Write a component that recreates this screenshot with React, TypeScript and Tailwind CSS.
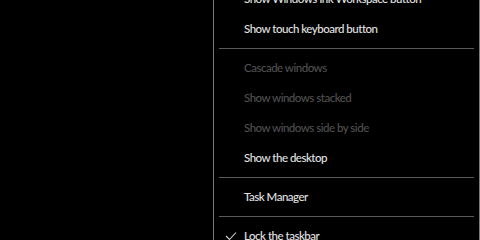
const items: ({ label: string; disabled?: boolean; checked?: boolean } | 'sep')[] = [
  { label: 'Show Windows Ink Workspace button' },
  { label: 'Show touch keyboard button' },
  'sep',
  { label: 'Cascade windows', disabled: true },
  { label: 'Show windows stacked', disabled: true },
  { label: 'Show windows side by side', disabled: true },
  { label: 'Show the desktop' },
  'sep',
  { label: 'Task Manager' },
  'sep',
  { label: 'Lock the taskbar', checked: true },
];

export default function App() {
  return (
    <div className="w-[480px] h-[240px] overflow-hidden bg-black flex font-['Lato',sans-serif]">
      <div className="w-[213px] shrink-0" />
      <div className="flex-1 -mt-[16px] h-[300px] border-x border-[#7a7a7a] bg-black">
        {items.map((it, i) =>
          it === 'sep' ? (
            <div key={i} className="h-[9px] flex items-center px-[5px]">
              <div className="h-px w-full bg-[#5a5a5a]" />
            </div>
          ) : (
            <div key={i} className="h-[30px] flex items-center">
              <div className="w-[30px] flex justify-end pr-[7px]">
                {it.checked && (
                  <svg width="12" height="10" viewBox="0 0 12 10" fill="none" stroke="#d0d0d0" strokeWidth="1.1">
                    <path d="M1 5 L4.5 8.5 L11 1.5" />
                  </svg>
                )}
              </div>
              <span
                className={`text-[11.5px] tracking-[-0.5px] font-medium leading-none ${
                  it.disabled ? 'text-[#505050]' : 'text-[#e2e2e2]'
                }`}
              >
                {it.label}
              </span>
            </div>
          )
        )}
      </div>
    </div>
  );
}
